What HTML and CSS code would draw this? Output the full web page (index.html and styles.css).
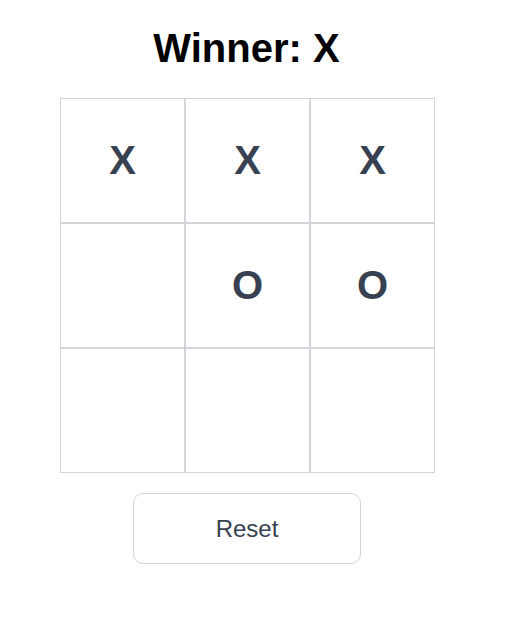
FILE: index.html
```html
<!DOCTYPE html>
<html lang="en">
<head>
<meta charset="utf-8">
<title>Tic Tac Toe</title>
<link rel="stylesheet" href="styles.css">
</head>
<body>
<main class="app">
  <h1 class="status">Winner: X</h1>
  <div class="board">
    <div class="cell">X</div>
    <div class="cell">X</div>
    <div class="cell">X</div>
    <div class="cell"></div>
    <div class="cell">O</div>
    <div class="cell">O</div>
    <div class="cell"></div>
    <div class="cell"></div>
    <div class="cell"></div>
  </div>
  <button class="reset" type="button">Reset</button>
</main>
</body>
</html>
```

FILE: styles.css
```css
html, body {
  margin: 0;
  padding: 0;
  background: #ffffff;
}

body {
  font-family: "Liberation Sans", Arial, sans-serif;
}

.app {
  width: 375px;
  margin-left: 60px;
  display: flex;
  flex-direction: column;
  align-items: center;
}

.status {
  margin: 25px 2px 27px 0;
  font-size: 40px;
  line-height: 46px;
  font-weight: 700;
  color: #000000;
}

.board {
  display: grid;
  grid-template-columns: repeat(3, 125px);
  grid-template-rows: repeat(3, 125px);
}

.cell {
  box-sizing: border-box;
  border: 1px solid #d1d5db;
  display: flex;
  align-items: center;
  justify-content: center;
  font-size: 40px;
  font-weight: 700;
  color: #374151;
}

.reset {
  box-sizing: border-box;
  margin: 20px 1px 0 0;
  width: 228px;
  height: 71px;
  border: 1px solid #d1d5db;
  border-radius: 10px;
  background: #ffffff;
  font-family: "Liberation Sans", Arial, sans-serif;
  font-size: 24px;
  color: #374151;
  padding: 0;
}
```
